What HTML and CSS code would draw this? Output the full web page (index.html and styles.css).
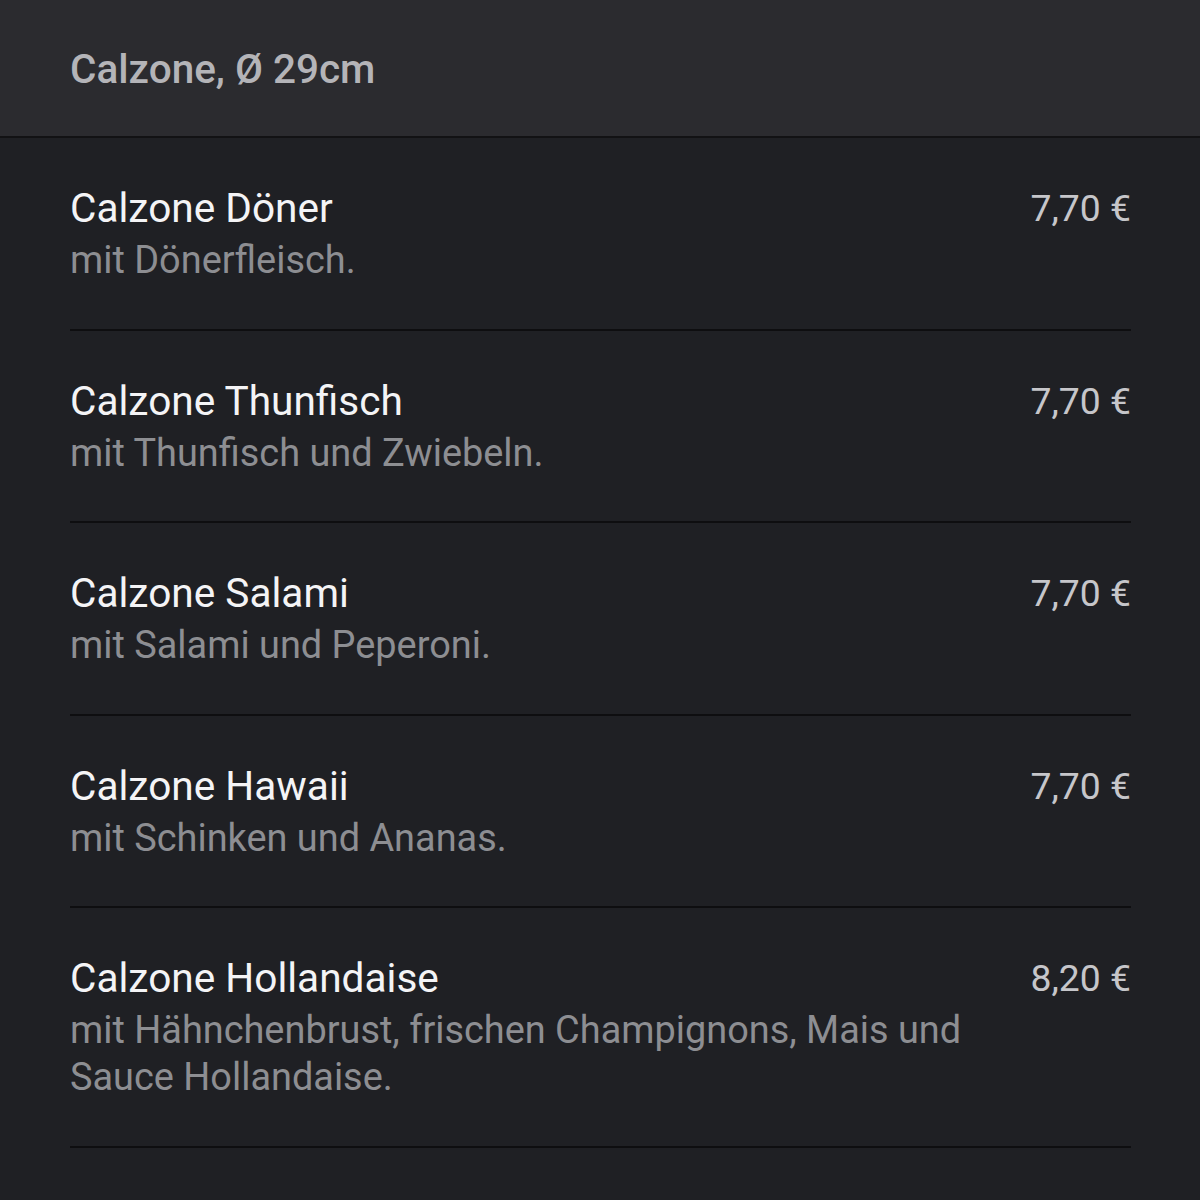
FILE: index.html
```html
<!DOCTYPE html>
<html>
<head>
<meta charset="utf-8">
<title>Calzone</title>
<link rel="stylesheet" href="styles.css">
</head>
<body>
	<div class="category">
		<h2 class="category-title">Calzone, Ø 29cm</h2>
	</div>
	<ul class="menu">
		<li class="item">
			<div class="item-text">
				<div class="item-name">Calzone Döner</div>
				<div class="item-desc">mit Dönerfleisch.</div>
			</div>
			<div class="item-price">7,70 €</div>
		</li>
		<li class="item">
			<div class="item-text">
				<div class="item-name">Calzone Thunfisch</div>
				<div class="item-desc">mit Thunfisch und Zwiebeln.</div>
			</div>
			<div class="item-price">7,70 €</div>
		</li>
		<li class="item">
			<div class="item-text">
				<div class="item-name">Calzone Salami</div>
				<div class="item-desc">mit Salami und Peperoni.</div>
			</div>
			<div class="item-price">7,70 €</div>
		</li>
		<li class="item">
			<div class="item-text">
				<div class="item-name">Calzone Hawaii</div>
				<div class="item-desc">mit Schinken und Ananas.</div>
			</div>
			<div class="item-price">7,70 €</div>
		</li>
		<li class="item">
			<div class="item-text">
				<div class="item-name">Calzone Hollandaise</div>
				<div class="item-desc">mit Hähnchenbrust, frischen Champignons, Mais und Sauce Hollandaise.</div>
			</div>
			<div class="item-price">8,20 €</div>
		</li>
	</ul>
</body>
</html>
```
FILE: styles.css
```css
html, body {
	margin: 0;
	padding: 0;
	background: #1f2024;
	font-family: Roboto, "Liberation Sans", sans-serif;
}

.category {
	background: #2b2b2f;
	border-bottom: 2px solid #121214;
	padding: 2px 70px 0;
	height: 134px;
	display: flex;
	align-items: center;
}

.category-title {
	margin: 0;
	font-size: 40.5px;
	font-weight: 500;
	color: #b4b4b8;
}

.menu {
	list-style: none;
	margin: 0;
	padding: 0 69px 0 70px;
}

.item {
	display: flex;
	justify-content: space-between;
	padding: 44px 0 44.5px;
	border-bottom: 2px solid #0e0e10;
}

.item-text {
	flex: 1;
	margin-right: 30px;
}

.item-name {
	font-size: 40.6px;
	line-height: 52px;
	color: #f4f4f6;
}

.item-desc {
	margin-top: 3px;
	font-size: 37.9px;
	line-height: 47px;
	color: #8d8e92;
}

.item-price {
	font-size: 37.3px;
	line-height: 52px;
	color: #c6c6ca;
	white-space: nowrap;
}
```
